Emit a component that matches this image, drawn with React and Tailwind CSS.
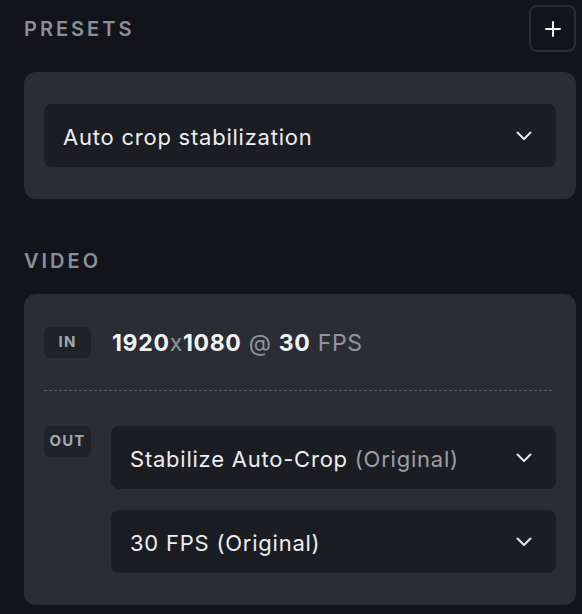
import React from 'react';

const Chevron = () => (
  <svg width="16" height="10" viewBox="0 0 16 10" fill="none" className="shrink-0">
    <path d="M1.5 1.5 L8 8 L14.5 1.5" stroke="#e5e7eb" strokeWidth="2" strokeLinecap="round" strokeLinejoin="round" />
  </svg>
);

const Select = ({ children }) => (
  <div className="h-[63px] rounded-lg bg-[#1b1d23] flex items-center justify-between pl-[19px] pr-[24px] text-[22px] tracking-[0.035em] text-[#eceef1]">
    <span className="pt-[3px]">{children}</span>
    <Chevron />
  </div>
);

const Badge = ({ label }) => (
  <div className="w-[47px] h-[31px] rounded-md bg-[#1f2228] flex items-center justify-center text-[15px] font-bold tracking-[0.08em] text-[#a3a9b1] shrink-0">
    {label}
  </div>
);

const SectionLabel = ({ children }) => (
  <h2 className="pt-px text-[20px] font-semibold tracking-[0.15em] text-[#8a9099] leading-7">{children}</h2>
);

export default function App() {
  return (
    <div className="min-h-[614px] bg-[#121419] pl-6 pr-[6px] pt-[5px] pb-[9px]" style={{ fontFamily: 'Inter, "Noto Sans", sans-serif' }}>
      {/* Presets header */}
      <div className="flex items-center justify-between">
        <SectionLabel>PRESETS</SectionLabel>
        <button className="w-[47px] h-[47px] rounded-lg border-2 border-[#2a2d33] flex items-center justify-center">
          <svg width="16" height="16" viewBox="0 0 16 16" fill="none">
            <path d="M8 1 V15 M1 8 H15" stroke="#f3f4f6" strokeWidth="2" strokeLinecap="round" />
          </svg>
        </button>
      </div>

      <div className="mt-5 rounded-xl bg-[#2a2d33] px-5 py-8">
        <Select>Auto crop stabilization</Select>
      </div>

      {/* Video */}
      <div className="mt-[47px]">
        <SectionLabel>VIDEO</SectionLabel>
      </div>

      <div className="mt-[19px] rounded-xl bg-[#2a2d33] px-5 pt-8 pb-8">
        <div className="flex items-center gap-[21px] h-[32px]">
          <Badge label="IN" />
          <div className="pt-[3px] text-[23px] tracking-[0.03em] text-[#8f959d]">
            <span className="font-bold text-[#f1f3f5]">1920</span>x<span className="font-bold text-[#f1f3f5]">1080</span> @ <span className="font-bold text-[#f1f3f5]">30</span> FPS
          </div>
        </div>

        <div className="mt-8 mr-1 border-t border-dashed border-[#5b6068]" />

        <div className="mt-[35px] flex items-start gap-[20px]">
          <Badge label="OUT" />
          <div className="flex-1 flex flex-col gap-[21px]">
            <Select>
              Stabilize Auto-Crop <span className="text-[#9aa0a8]">(Original)</span>
            </Select>
            <Select>30 FPS (Original)</Select>
          </div>
        </div>
      </div>
    </div>
  );
}
